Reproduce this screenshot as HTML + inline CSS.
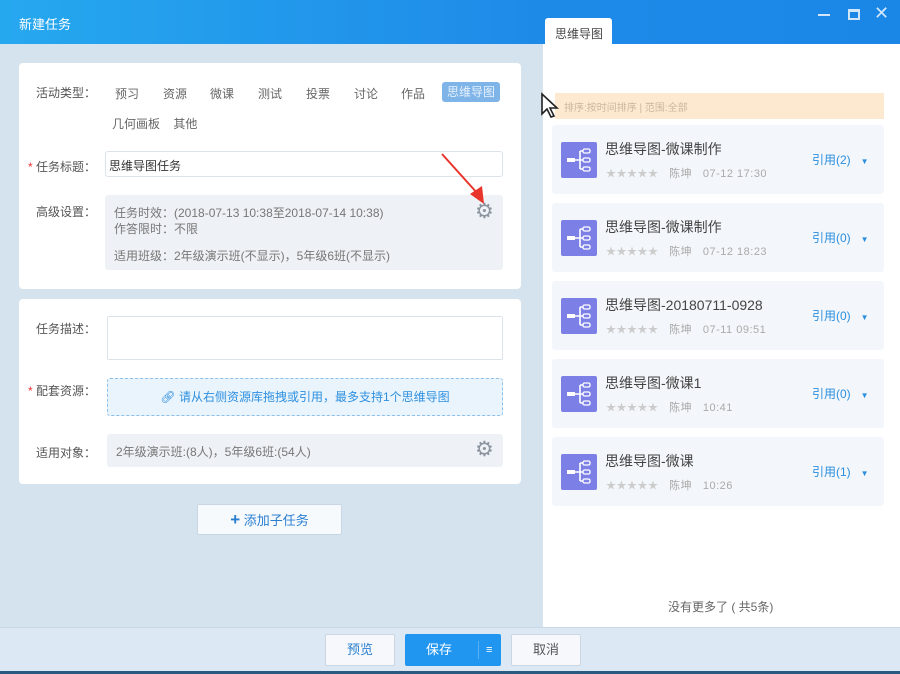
<!DOCTYPE html>
<html><head><meta charset="utf-8"><style>
*{margin:0;padding:0;box-sizing:border-box}
body{width:900px;height:674px;overflow:hidden;position:relative;background:#d5e3ef;font-family:"Liberation Sans","Noto Sans CJK SC",sans-serif;font-size:12px;color:#555}
.abs{position:absolute}
.hdr{left:0;top:0;width:900px;height:44px;background:linear-gradient(90deg,#26a8ef,#1e8ae8 60%,#1a86e6)}
.card{background:#fff;border-radius:4px}
.lbl{color:#555;font-size:12px}
.gray{background:#eef1f5;border-radius:3px}
.item{left:552px;width:332px;height:69px;background:#f3f6fa;border-radius:3px}
.ico{position:absolute;left:9px;top:17px;width:36px;height:36px;background:#7c80e6;border-radius:2px}
.ico svg{position:absolute;left:0;top:0}
.t{position:absolute;left:53px;top:14px;font-size:14px;color:#444}
.m{position:absolute;left:54px;top:40px;font-size:11px;color:#aaa;letter-spacing:.5px}
.m b{color:#ccc;font-weight:normal;font-size:10px}
.r{position:absolute;left:260px;top:26px;font-size:12px;color:#2a8fe0}
.btn{top:634px;height:32px;border:1px solid #cdd7e2;background:#f6f8fb;border-radius:2px;text-align:center;line-height:30px;font-size:13px}
</style></head><body>
<div class="abs hdr"></div>
<div class="abs" style="left:19px;top:14px;color:#fff;font-size:13px">新建任务</div>
<div class="abs" style="left:545px;top:18px;width:67px;height:27px;background:#fff;border-radius:3px 3px 0 0;font-size:12px;color:#444;padding:7px 0 0 10px">思维导图</div>
<div class="abs" style="left:818px;top:14px;width:12px;height:2px;background:#cfe6fb"></div>
<div class="abs" style="left:848px;top:9px;width:12px;height:11px;border:2px solid #cfe6fb;border-top-width:3px"></div>
<div class="abs" style="left:874px;top:3px;color:#cfe6fb;font-size:18px">✕</div>

<div class="abs" style="left:543px;top:44px;width:357px;height:583px;background:#fff"></div>
<div class="abs" style="left:555px;top:93px;width:329px;height:26px;background:#fde9cf"></div>
<div class="abs" style="left:564px;top:99px;font-size:10px;color:#c9b79c">排序:按时间排序 | 范围:全部</div>
<svg class="abs" style="left:540px;top:92px" width="20" height="28"><path d="M2 2 L2 22 L7 17 L11 25 L14 24 L10 16 L17 16 Z" fill="#fff" stroke="#222" stroke-width="1.6"/></svg>

<svg width="0" height="0" style="position:absolute"><defs><g id="tr"><rect x="6" y="16" width="8" height="4" fill="#fff"/><path d="M14 18 H19 M19 9 V27 M19 9 H22 M19 18 H22 M19 27 H22" stroke="#fff" stroke-width="1.6" fill="none"/><rect x="22" y="7" width="7" height="4" rx="1.5" fill="none" stroke="#fff" stroke-width="1.3"/><rect x="22" y="16" width="7" height="4" rx="1.5" fill="none" stroke="#fff" stroke-width="1.3"/><rect x="22" y="25" width="7" height="4" rx="1.5" fill="none" stroke="#fff" stroke-width="1.3"/></g></defs></svg>

<div class="abs item" style="top:125px"><div class="ico"><svg width="36" height="36"><use href="#tr"/></svg></div><div class="t">思维导图-微课制作</div><div class="m"><b>★★★★★</b> &nbsp; 陈坤 &nbsp; 07-12 17:30</div><div class="r">引用(2) &nbsp; <span style="font-size:8px">▼</span></div></div>
<div class="abs item" style="top:203px"><div class="ico"><svg width="36" height="36"><use href="#tr"/></svg></div><div class="t">思维导图-微课制作</div><div class="m"><b>★★★★★</b> &nbsp; 陈坤 &nbsp; 07-12 18:23</div><div class="r">引用(0) &nbsp; <span style="font-size:8px">▼</span></div></div>
<div class="abs item" style="top:281px"><div class="ico"><svg width="36" height="36"><use href="#tr"/></svg></div><div class="t">思维导图-20180711-0928</div><div class="m"><b>★★★★★</b> &nbsp; 陈坤 &nbsp; 07-11 09:51</div><div class="r">引用(0) &nbsp; <span style="font-size:8px">▼</span></div></div>
<div class="abs item" style="top:359px"><div class="ico"><svg width="36" height="36"><use href="#tr"/></svg></div><div class="t">思维导图-微课1</div><div class="m"><b>★★★★★</b> &nbsp; 陈坤 &nbsp; 10:41</div><div class="r">引用(0) &nbsp; <span style="font-size:8px">▼</span></div></div>
<div class="abs item" style="top:437px"><div class="ico"><svg width="36" height="36"><use href="#tr"/></svg></div><div class="t">思维导图-微课</div><div class="m"><b>★★★★★</b> &nbsp; 陈坤 &nbsp; 10:26</div><div class="r">引用(1) &nbsp; <span style="font-size:8px">▼</span></div></div>
<div class="abs" style="left:668px;top:598px;font-size:12px;color:#666">没有更多了 ( 共5条)</div>

<div class="abs card" style="left:19px;top:63px;width:502px;height:226px"></div>
<div class="abs lbl" style="left:36px;top:84px">活动类型：</div>
<div class="abs" style="left:115px;top:85px;color:#666">预习</div>
<div class="abs" style="left:163px;top:85px;color:#666">资源</div>
<div class="abs" style="left:210px;top:85px;color:#666">微课</div>
<div class="abs" style="left:258px;top:85px;color:#666">测试</div>
<div class="abs" style="left:306px;top:85px;color:#666">投票</div>
<div class="abs" style="left:354px;top:85px;color:#666">讨论</div>
<div class="abs" style="left:401px;top:85px;color:#666">作品</div>
<div class="abs" style="left:442px;top:82px;width:58px;height:20px;background:#7fb4e8;border-radius:3px;color:#e6f1fc;text-align:center;line-height:20px">思维导图</div>
<div class="abs" style="left:112px;top:115px;color:#666">几何画板 &nbsp; &nbsp;其他</div>
<div class="abs lbl" style="left:28px;top:158px"><span style="color:#e33">*</span> 任务标题：</div>
<div class="abs" style="left:105px;top:151px;width:398px;height:26px;border:1px solid #dde3ea;border-radius:3px;background:#fff;padding:5px 0 0 3px;color:#333">思维导图任务</div>
<div class="abs lbl" style="left:36px;top:203px">高级设置：</div>
<div class="abs gray" style="left:105px;top:195px;width:398px;height:75px"></div>
<div class="abs" style="left:114px;top:205px;color:#777;line-height:16px">任务时效：(2018-07-13 10:38至2018-07-14 10:38)<br>作答限时：不限</div>
<div class="abs" style="left:114px;top:247px;color:#777">适用班级：2年级演示班(不显示)，5年级6班(不显示)</div>
<div class="abs" style="left:475px;top:199px;color:#8c959f;font-size:21px">⚙</div>
<svg class="abs" style="left:440px;top:150px" width="50" height="56"><path d="M2 4 L38 44" stroke="#e8342a" stroke-width="2"/><path d="M44 54 L30 44 L42 36 Z" fill="#e8342a"/></svg>

<div class="abs card" style="left:19px;top:299px;width:502px;height:185px"></div>
<div class="abs lbl" style="left:36px;top:320px">任务描述：</div>
<div class="abs" style="left:107px;top:316px;width:396px;height:44px;border:1px solid #dde3ea;border-radius:2px;background:#fff"></div>
<div class="abs lbl" style="left:28px;top:382px"><span style="color:#e33">*</span> 配套资源：</div>
<div class="abs" style="left:107px;top:378px;width:396px;height:38px;border:1px dashed #8cc0ea;border-radius:3px;background:#eaf4fc;color:#2d8fe0;text-align:center;line-height:36px">🔗︎ 请从右侧资源库拖拽或引用，最多支持1个思维导图</div>
<div class="abs lbl" style="left:36px;top:444px">适用对象：</div>
<div class="abs gray" style="left:107px;top:434px;width:396px;height:33px;color:#777;padding:9px 0 0 9px">2年级演示班:(8人)，5年级6班:(54人)</div>
<div class="abs" style="left:475px;top:437px;color:#8c959f;font-size:21px">⚙</div>

<div class="abs" style="left:197px;top:504px;width:145px;height:31px;background:#f7fafd;border:1px solid #c9d6e3;border-radius:2px;text-align:center;line-height:29px;color:#2a7fd0;font-size:13px"><b style="font-size:17px">+</b> 添加子任务</div>

<div class="abs" style="left:0;top:627px;width:900px;height:47px;background:#dce8f3;border-top:1px solid #c8d8e6"></div>
<div class="abs" style="left:0;top:671px;width:900px;height:3px;background:#2a5a80"></div>
<div class="abs btn" style="left:325px;width:70px;color:#2a7fd0">预览</div>
<div class="abs btn" style="left:405px;width:96px;background:#2196f0;border-color:#2196f0;color:#fff;text-align:left;padding-left:20px">保存<span style="position:absolute;left:72px;top:6px;height:18px;border-left:1px solid #5ab0f5"></span><span style="position:absolute;left:80px;font-size:11px">≡</span></div>
<div class="abs btn" style="left:511px;width:70px;color:#555">取消</div>
</body></html>
